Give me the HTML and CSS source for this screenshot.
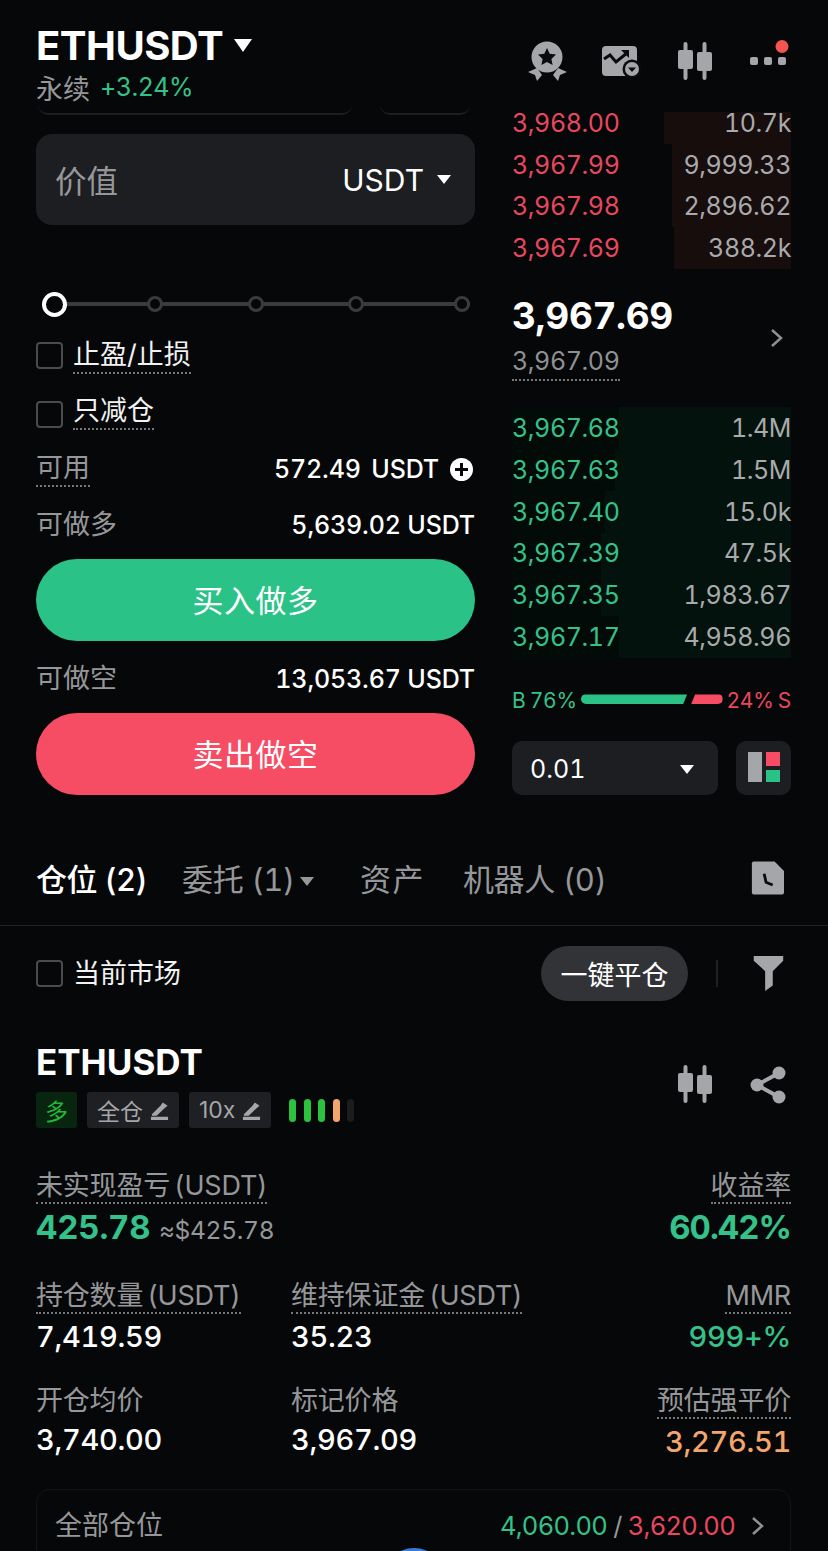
FILE: index.html
```html
<!DOCTYPE html>
<html lang="zh-CN">
<head>
    <meta charset="UTF-8">
    <meta name="viewport" content="width=device-width, initial-scale=1.0">
    <title>ETHUSDT 永续</title>
    <link rel="stylesheet" href="styles.css">
</head>
<body>
    <!-- Icon sprite -->
    <svg class="sprite" aria-hidden="true">
        <symbol id="icon-candles" viewBox="0 0 44 44">
            <path d="M12.5 4v34M31.5 4v34" stroke="#a5a6a9" stroke-width="4" stroke-linecap="round" fill="none"/>
            <rect x="5" y="10" width="15" height="19" rx="2" fill="#a5a6a9"/>
            <rect x="24" y="12" width="15" height="19" rx="2" fill="#a5a6a9"/>
        </symbol>
        <symbol id="icon-pencil" viewBox="0 0 20 20">
            <path d="M2 14L11 5l2.500-3.500L18.500 5 15 8l-8 7.500H2zM1 16.500h18V20H1z" fill="#a5a6a9"/>
        </symbol>
    </svg>

    <!-- Header -->
    <header class="header">
        <div class="pair">
            <div class="pair-title">
                <h1>ETHUSDT</h1>
                <span class="caret caret-lg"></span>
            </div>
            <div class="pair-sub">
                <span class="muted">永续</span>
                <span class="green">+3.24%</span>
            </div>
        </div>
        <div class="header-icons">
            <svg class="icon-44" viewBox="0 0 44 44">
                <circle cx="21" cy="17" r="15.500" fill="#a5a6a9"/>
                <path d="M21 8l2.700 5.800 6.300.8-4.600 4.300 1.200 6.200-5.600-3.100-5.600 3.100 1.200-6.200-4.600-4.300 6.300-.8z" fill="#0a0b0c"/>
                <path d="M2 32l9-4 5 7-5 6-2-6zM41 32l-9-4-5 7 5 6 2-6z" fill="#a5a6a9"/>
            </svg>
            <svg class="icon-44" viewBox="0 0 44 44">
                <rect x="3" y="6" width="35" height="30" rx="4" fill="#a5a6a9"/>
                <path d="M5 19l6-4 6 7 11-9" stroke="#0a0b0c" stroke-width="3" fill="none"/>
                <path d="M22 10h8v8z" fill="#0a0b0c"/>
                <circle cx="33" cy="29" r="9.500" fill="#0a0b0c"/>
                <circle cx="33" cy="29" r="7" fill="#a5a6a9"/>
                <path d="M29 27.500h8l-4 4.500z" fill="#0a0b0c"/>
            </svg>
            <svg class="icon-44"><use href="#icon-candles"/></svg>
            <svg class="icon-44" viewBox="0 0 44 44">
                <rect x="4" y="17" width="8" height="8" rx="2" fill="#a5a6a9"/>
                <rect x="18" y="17" width="8" height="8" rx="2" fill="#a5a6a9"/>
                <rect x="32" y="17" width="8" height="8" rx="2" fill="#a5a6a9"/>
                <circle cx="36" cy="6.500" r="6.500" fill="#f4564f"/>
            </svg>
        </div>
    </header>

    <!-- Order form and book -->
    <main class="trade">
        <section class="order-form">
            <div class="stub-row">
                <div class="stub stub-wide"></div>
                <div class="stub stub-narrow"></div>
            </div>
            <div class="value-field">
                <span class="muted">价值</span>
                <span class="unit">USDT <span class="caret"></span></span>
            </div>
            <div class="slider">
                <span class="slider-handle"></span>
                <span class="slider-dot"></span>
                <span class="slider-dot"></span>
                <span class="slider-dot"></span>
                <span class="slider-dot slider-dot-last"></span>
            </div>
            <label class="check-row">
                <span class="checkbox"></span>
                <span class="dotted">止盈/止损</span>
            </label>
            <label class="check-row check-row-2">
                <span class="checkbox"></span>
                <span class="dotted">只减仓</span>
            </label>
            <div class="info-row info-first">
                <span class="muted dotted">可用</span>
                <span class="info-value">572.49&nbsp;USDT <span class="plus"></span></span>
            </div>
            <div class="info-row info-second">
                <span class="muted">可做多</span>
                <span class="info-value">5,639.02 USDT</span>
            </div>
            <button class="trade-btn buy">买入做多</button>
            <div class="info-row info-third">
                <span class="muted">可做空</span>
                <span class="info-value">13,053.67 USDT</span>
            </div>
            <button class="trade-btn sell">卖出做空</button>
        </section>

        <section class="book">
            <div class="asks">
                <div class="book-row first"><i class="depth" style="width:127px"></i><span class="red">3,968.00</span><span>10.7k</span></div>
                <div class="book-row"><i class="depth" style="width:119px"></i><span class="red">3,967.99</span><span>9,999.33</span></div>
                <div class="book-row"><i class="depth" style="width:119px"></i><span class="red">3,967.98</span><span>2,896.62</span></div>
                <div class="book-row"><i class="depth" style="width:117px"></i><span class="red">3,967.69</span><span>388.2k</span></div>
            </div>
            <div class="mid-price">
                <div class="mid-text">
                    <div class="last-price">3,967.69</div>
                    <span class="mark-price dotted">3,967.09</span>
                </div>
                <svg class="chevron" viewBox="0 0 14 22"><path d="M2 3l9 8-9 8" stroke="#8f9093" stroke-width="2.500" fill="none"/></svg>
            </div>
            <div class="bids">
                <div class="book-row"><i class="depth" style="width:172px"></i><span class="green">3,967.68</span><span>1.4M</span></div>
                <div class="book-row"><i class="depth" style="width:176px"></i><span class="green">3,967.63</span><span>1.5M</span></div>
                <div class="book-row"><i class="depth" style="width:186px"></i><span class="green">3,967.40</span><span>15.0k</span></div>
                <div class="book-row"><i class="depth" style="width:190px"></i><span class="green">3,967.39</span><span>47.5k</span></div>
                <div class="book-row"><i class="depth" style="width:190px"></i><span class="green">3,967.35</span><span>1,983.67</span></div>
                <div class="book-row"><i class="depth" style="width:172px"></i><span class="green">3,967.17</span><span>4,958.96</span></div>
            </div>
            <div class="ratio">
                <span class="green">B 76%</span>
                <span class="ratio-bar">
                    <i class="ratio-buy"></i>
                    <i class="ratio-sell"></i>
                </span>
                <span class="red">24% S</span>
            </div>
            <div class="book-controls">
                <div class="precision">0.01 <span class="caret"></span></div>
                <div class="layout-btn">
                    <svg width="32" height="32" viewBox="0 0 32 32">
                        <rect x="0" y="0" width="14" height="30" fill="#a5a6a9"/>
                        <rect x="18" y="0" width="14" height="14" fill="#f64d64"/>
                        <rect x="18" y="18" width="14" height="12" fill="#2bc287"/>
                    </svg>
                </div>
            </div>
        </section>
    </main>

    <!-- Tabs -->
    <nav class="tabs">
        <span class="tab active">仓位 (2)</span>
        <span class="tab tab-caret">委托 (1) <span class="caret caret-grey"></span></span>
        <span class="tab tab-assets">资产</span>
        <span class="tab">机器人 (0)</span>
        <svg class="tab-icon" viewBox="0 0 36 38">
            <path d="M4 2h22l10 10v23a2 2 0 0 1-2 2H4a2 2 0 0 1-2-2V4a2 2 0 0 1 2-2z" fill="#a5a6a9"/>
            <path d="M15 15l2 9 7 3" stroke="#0a0b0c" stroke-width="3" fill="none"/>
        </svg>
    </nav>

    <!-- Filter row -->
    <div class="filter-row">
        <label class="check-row">
            <span class="checkbox"></span>
            <span>当前市场</span>
        </label>
        <div class="filter-actions">
            <button class="close-all">一键平仓</button>
            <span class="filter-sep"></span>
            <svg class="icon-36" viewBox="0 0 36 40">
                <path d="M3 1h31v5L23 17v15l-8 6V17L3 6z" fill="#a5a6a9"/>
            </svg>
        </div>
    </div>

    <!-- Position card -->
    <section class="position">
        <div class="position-head">
            <div>
                <h2>ETHUSDT</h2>
                <div class="tags">
                    <span class="tag tag-long">多</span>
                    <span class="tag">全仓 <svg class="pencil"><use href="#icon-pencil"/></svg></span>
                    <span class="tag">10x <svg class="pencil"><use href="#icon-pencil"/></svg></span>
                    <span class="risk">
                        <i class="on"></i><i class="on"></i><i class="on"></i><i class="warn"></i><i></i>
                    </span>
                </div>
            </div>
            <div class="position-icons">
                <svg class="icon-44"><use href="#icon-candles"/></svg>
                <svg class="icon-36" viewBox="0 0 36 38">
                    <path d="M29 7L7 19l22 12" stroke="#a5a6a9" stroke-width="4" fill="none"/>
                    <circle cx="7" cy="19" r="6.500" fill="#a5a6a9"/>
                    <circle cx="29" cy="7" r="6.500" fill="#a5a6a9"/>
                    <circle cx="29" cy="31" r="6.500" fill="#a5a6a9"/>
                </svg>
            </div>
        </div>

        <div class="stats">
            <div class="stat">
                <span class="stat-label dotted">未实现盈亏 (USDT)</span>
                <div class="stat-value big green">425.78 <span class="approx">≈$425.78</span></div>
            </div>
            <div></div>
            <div class="stat right">
                <span class="stat-label dotted">收益率</span>
                <div class="stat-value big green">60.42%</div>
            </div>

            <div class="stat">
                <span class="stat-label dotted">持仓数量 (USDT)</span>
                <div class="stat-value">7,419.59</div>
            </div>
            <div class="stat">
                <span class="stat-label dotted">维持保证金 (USDT)</span>
                <div class="stat-value">35.23</div>
            </div>
            <div class="stat right">
                <span class="stat-label dotted">MMR</span>
                <div class="stat-value green">999+%</div>
            </div>

            <div class="stat">
                <span class="stat-label">开仓均价</span>
                <div class="stat-value">3,740.00</div>
            </div>
            <div class="stat">
                <span class="stat-label">标记价格</span>
                <div class="stat-value">3,967.09</div>
            </div>
            <div class="stat right">
                <span class="stat-label dotted">预估强平价</span>
                <div class="stat-value orange">3,276.51</div>
            </div>
        </div>

        <div class="all-positions">
            <span class="muted">全部仓位</span>
            <span class="all-values">
                <span class="green">4,060.00</span>
                <span class="muted">/</span>
                <span class="red">3,620.00</span>
                <svg class="chevron" viewBox="0 0 14 22"><path d="M2 3l9 8-9 8" stroke="#8f9093" stroke-width="2.500" fill="none"/></svg>
            </span>
            <span class="float-ball"></span>
        </div>
    </section>
</body>
</html>
```

FILE: styles.css
```css
/* General Styles */
* {
    margin: 0;
    padding: 0;
    box-sizing: border-box;
}

body {
    font-family: Inter, 'Noto Sans CJK SC', 'Noto Sans', sans-serif;
    font-variant-numeric: tabular-nums;
    background: #060708;
    color: #fff;
    width: 828px;
    height: 1551px;
    overflow: hidden;
}

.sprite {
    display: none;
}

.muted { color: #96979a; }
.green { color: #35c28a; }
.red { color: #e8485f; }
.orange { color: #f4a56c; }

.dotted {
    display: inline-block;
    border-bottom: 2px dotted #77787b;
}

.caret {
    display: inline-block;
    width: 0;
    height: 0;
    border-left: 7.500px solid transparent;
    border-right: 7.500px solid transparent;
    border-top: 9.500px solid #fff;
}

.caret-lg {
    border-left-width: 9px;
    border-right-width: 9px;
    border-top-width: 13px;
}

.caret-grey {
    border-left-width: 7px;
    border-right-width: 7px;
    border-top-color: #96979a;
    margin-left: -3px;
    vertical-align: 5px;
}

.icon-44 {
    width: 44px;
    height: 44px;
    display: block;
}

.icon-36 {
    width: 36px;
    height: 38px;
    display: block;
}

/* Header */
.header {
    height: 102px;
    padding: 24px 38px 0 36px;
    display: flex;
    justify-content: space-between;
}

.pair-title {
    display: flex;
    align-items: center;
    gap: 11px;
}

.pair-title h1 {
    font-size: 40px;
    line-height: 44px;
    font-weight: 700;
    letter-spacing: -0.5px;
}

.pair-title .caret {
    margin-top: -2px;
}

.pair-sub {
    display: flex;
    align-items: center;
    gap: 10px;
    height: 36px;
    margin-top: 1px;
    font-size: 25px;
    letter-spacing: -0.5px;
}

.pair-sub .muted {
    font-size: 27px;
    letter-spacing: 0;
}

.header-icons {
    display: flex;
    gap: 29.5px;
    padding-top: 16px;
}

/* Trade area */
.trade {
    display: flex;
    gap: 37px;
    padding: 0 37px 0 36px;
    height: 698px;
}

.order-form {
    width: 439px;
    padding-top: 3px;
}

.stub-row {
    display: flex;
    gap: 28px;
    height: 10px;
    padding-left: 2px;
}

.stub {
    border-bottom: 2px solid #1d1e22;
    border-radius: 0 0 16px 16px;
}

.stub-wide { width: 314px; }
.stub-narrow { width: 90px; }

.value-field {
    margin-top: 19px;
    height: 91px;
    padding: 0 24px 2px 19px;
    background: #1d1e22;
    border-radius: 16px;
    display: flex;
    align-items: center;
    justify-content: space-between;
    font-size: 31.500px;
}

.unit {
    font-size: 30px;
    display: flex;
    align-items: center;
    gap: 13px;
    margin-top: 2px;
}

.slider {
    margin-top: 67px;
    margin-left: 6px;
    margin-right: 5px;
    height: 24px;
    display: flex;
    align-items: center;
    justify-content: space-between;
    background: linear-gradient(#3a3b3e, #3a3b3e) center / 100% 4px no-repeat;
}

.slider-handle {
    width: 25px;
    height: 25px;
    margin-right: -5px;
    border: 4px solid #fff;
    border-radius: 50%;
    background: #060708;
}

.slider-dot {
    width: 16px;
    height: 16px;
    border: 3px solid #3a3b3e;
    border-radius: 50%;
    background: #060708;
}

.slider-dot-last {
    margin-left: 5px;
}

.check-row {
    display: flex;
    align-items: center;
    gap: 10px;
    font-size: 27px;
    line-height: 34px;
    color: #f2f2f2;
}

.order-form .check-row {
    margin-top: 22px;
    align-items: flex-start;
}

.order-form .check-row .checkbox {
    margin-top: 4px;
}

.order-form .check-row-2 {
    margin-top: 20px;
}

.order-form .check-row-2 .checkbox {
    margin-top: 7px;
}

.checkbox {
    width: 27px;
    height: 27px;
    flex: none;
    border: 2px solid #4a4b4e;
    border-radius: 4px;
}

.info-row {
    display: flex;
    justify-content: space-between;
    align-items: center;
    font-size: 27px;
    line-height: 34px;
}

.info-first { margin-top: 21px; }
.info-second { margin-top: 21px; }
.info-third { margin-top: 21px; }

.info-value {
    font-size: 25px;
    font-weight: 500;
    letter-spacing: -0.15px;
    color: #fff;
    display: flex;
    align-items: center;
    gap: 11px;
}

.info-first .info-value {
    word-spacing: 4px;
}

.plus {
    position: relative;
    width: 23px;
    height: 23px;
    border-radius: 50%;
    background: #fff;
    margin-right: 2px;
}

.plus::before,
.plus::after {
    content: '';
    position: absolute;
    left: 5px;
    top: 10px;
    width: 13px;
    height: 3px;
    background: #060708;
}

.plus::after {
    transform: rotate(90deg);
}

.trade-btn {
    display: block;
    width: 100%;
    height: 82px;
    padding-bottom: 3px;
    border: none;
    border-radius: 41px;
    font-family: inherit;
    font-size: 31px;
    font-weight: 400;
    color: #fff;
    letter-spacing: 0.5px;
}

.trade-btn.buy {
    margin-top: 17px;
    background: #2bc287;
}

.trade-btn.sell {
    margin-top: 17px;
    background: #f64d64;
}

/* Order book */
.book {
    width: 279px;
}

.book-row {
    position: relative;
    height: 41.800px;
    display: flex;
    align-items: center;
    justify-content: space-between;
    font-size: 25px;
    letter-spacing: -0.4px;
    color: #a9aaac;
}

.book-row span {
    position: relative;
}

.depth {
    position: absolute;
    right: 0;
    top: 0;
    bottom: 0;
    background: #170d0d;
}

.book-row.first .depth {
    top: 10px;
}

.bids {
    background: #030b08;
}

.bids .depth {
    background: #04120d;
}

.mid-price {
    height: 138px;
    padding-right: 7px;
    display: flex;
    align-items: center;
    justify-content: space-between;
}

.mid-text {
    align-self: flex-start;
    padding-top: 25px;
}

.last-price {
    font-size: 37px;
    line-height: 44px;
    font-weight: 700;
    letter-spacing: -0.3px;
}

.mark-price {
    margin-top: 5px;
    font-size: 25px;
    line-height: 36px;
    letter-spacing: -0.4px;
    color: #8f9093;
}

.chevron {
    width: 14px;
    height: 22px;
    flex: none;
}

.ratio {
    margin-top: 24px;
    display: flex;
    align-items: center;
    justify-content: space-between;
    font-size: 21px;
    line-height: 38px;
    letter-spacing: -0.3px;
    word-spacing: -1px;
}

.ratio-bar {
    flex: 1;
    display: flex;
    gap: 4px;
    padding: 0 4px;
    margin-top: -3px;
}

.ratio-bar i {
    height: 10px;
    display: block;
}

.ratio-buy {
    flex: 108;
    background: #2bc287;
    border-radius: 5px 0 0 5px;
    clip-path: polygon(0 0, 100% 0, calc(100% - 4px) 100%, 0 100%);
}

.ratio-sell {
    flex: 32;
    background: #f64d64;
    border-radius: 0 5px 5px 0;
    clip-path: polygon(4px 0, 100% 0, 100% 100%, 0 100%);
}

.book-controls {
    margin-top: 21px;
    display: flex;
    justify-content: space-between;
}

.precision {
    width: 206px;
    height: 54px;
    padding: 3px 24px 0 18px;
    background: #1d1e22;
    border-radius: 10px;
    display: flex;
    align-items: center;
    justify-content: space-between;
    font-size: 25px;
}

.layout-btn {
    width: 55px;
    height: 54px;
    background: #1d1e22;
    border-radius: 10px;
    display: flex;
    align-items: center;
    justify-content: center;
}

/* Tabs */
.tabs {
    height: 126px;
    padding: 30px 44px 0 36px;
    border-bottom: 1px solid #222326;
    display: flex;
    align-items: center;
    font-size: 31px;
    letter-spacing: -0.3px;
    color: #96979a;
}

.tab {
    margin-right: 35px;
    white-space: nowrap;
}

.tab.active {
    color: #fff;
    font-weight: 500;
    letter-spacing: -0.6px;
}

.tab-caret {
    margin-right: 46px;
}

.tab-assets {
    margin-right: 38px;
    letter-spacing: 1.5px;
}

.tab-icon {
    width: 34px;
    height: 37px;
    margin-left: auto;
}

/* Filter row */
.filter-row {
    height: 95px;
    padding: 0 42px 0 36px;
    display: flex;
    align-items: center;
    justify-content: space-between;
}

.filter-actions {
    display: flex;
    align-items: center;
}

.close-all {
    width: 147px;
    height: 55px;
    border: none;
    border-radius: 28px;
    background: #323337;
    color: #fff;
    font-family: inherit;
    font-size: 27px;
}

.filter-sep {
    width: 2px;
    height: 27px;
    margin: 0 32px 0 28px;
    background: #1f2023;
}

/* Position card */
.position {
    padding: 0 37px 0 36px;
}

.position-head {
    display: flex;
    justify-content: space-between;
    padding-top: 19px;
}

.position-head h2 {
    font-size: 35px;
    line-height: 44px;
    font-weight: 700;
}

.position-icons {
    display: flex;
    align-items: center;
    gap: 33px;
    padding-right: 5.500px;
    padding-top: 12px;
    height: 78px;
}

.tags {
    display: flex;
    align-items: center;
    gap: 10px;
    margin-top: 8px;
}

.tag {
    height: 36px;
    padding: 0 10px;
    border-radius: 3px;
    background: #1e2024;
    color: #a5a6a9;
    font-size: 23px;
    font-variant-numeric: normal;
    display: flex;
    align-items: center;
    gap: 7px;
}

.tag-long {
    padding: 0 9px;
    background: #07250f;
    color: #25b53a;
}

.pencil {
    width: 19px;
    height: 19px;
}

.risk {
    display: flex;
    gap: 7.500px;
    margin-left: 8px;
}

.risk i {
    width: 7px;
    height: 23px;
    border-radius: 4px;
    background: #1c1c1c;
}

.risk .on { background: #2cc13f; }
.risk .warn { background: #f4a56c; }

.stats {
    display: grid;
    grid-template-columns: 255px 1fr auto;
    row-gap: 29px;
    margin-top: 42px;
}

.stat-label {
    font-size: 27px;
    line-height: 32px;
    word-spacing: -3px;
    letter-spacing: -0.2px;
    color: #96979a;
}

.stat-value {
    font-size: 29px;
    line-height: 38px;
    font-weight: 500;
    letter-spacing: -0.3px;
    margin-top: 4px;
    white-space: nowrap;
}

.stat-value.big {
    font-size: 33px;
    font-weight: 700;
    line-height: 42px;
    letter-spacing: -0.2px;
    margin-top: 2px;
}

.stat.right .big {
    letter-spacing: -1px;
}

.approx {
    font-size: 24.500px;
    font-weight: 400;
    letter-spacing: -0.3px;
    color: #96979a;
}

.stat.right {
    text-align: right;
}

.all-positions {
    position: relative;
    margin-top: 28px;
    height: 90px;
    padding: 17px 25px 0 18px;
    border: 1px solid #141517;
    border-radius: 14px;
    display: flex;
    align-items: flex-start;
    justify-content: space-between;
    font-size: 27px;
    line-height: 38px;
}

.all-values {
    display: flex;
    align-items: center;
    gap: 6px;
    font-size: 25.500px;
    letter-spacing: -0.7px;
}

.all-values .chevron {
    margin-left: 10px;
}

.float-ball {
    position: absolute;
    left: 345px;
    top: 58px;
    width: 64px;
    height: 64px;
    border-radius: 50%;
    background: #3a7bd5;
}
```
